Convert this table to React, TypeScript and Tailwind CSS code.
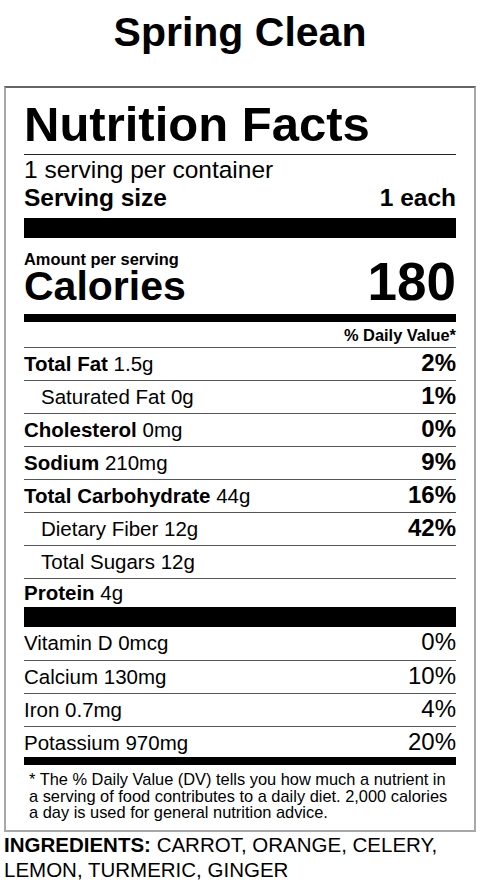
const nutrients = [
  { label: "Total Fat", amount: "1.5g", dv: "2%", bold: true },
  { label: "Saturated Fat", amount: "0g", dv: "1%", indent: true },
  { label: "Cholesterol", amount: "0mg", dv: "0%", bold: true },
  { label: "Sodium", amount: "210mg", dv: "9%", bold: true },
  { label: "Total Carbohydrate", amount: "44g", dv: "16%", bold: true },
  { label: "Dietary Fiber", amount: "12g", dv: "42%", indent: true },
  { label: "Total Sugars", amount: "12g", dv: "", indent: true },
];

const vitamins = [
  { label: "Vitamin D", amount: "0mcg", dv: "0%" },
  { label: "Calcium", amount: "130mg", dv: "10%" },
  { label: "Iron", amount: "0.7mg", dv: "4%" },
  { label: "Potassium", amount: "970mg", dv: "20%" },
];

function App() {
  return (
    <div
      className="w-[480px] min-h-[896px] bg-white text-black"
      style={{ fontFamily: '"Liberation Sans", Arial, sans-serif' }}
    >
      <h1 className="pt-[12px] text-center text-[41px] font-bold leading-[40px]">
        Spring Clean
      </h1>

      <div className="mx-[4px] mt-[34px] border-2 border-[#a8a8a8] border-t-[#666] px-[18px] pb-[9px]">
        <div className="pt-[12px] pb-[6px] text-[49px] font-bold leading-[48px] border-b border-[#222]">
          Nutrition Facts
        </div>
        <div className="pt-[3px] text-[24.5px] leading-[24px]">1 serving per container</div>
        <div className="mt-[4px] flex justify-between text-[24.5px] font-bold leading-[24px]">
          <span>Serving size</span>
          <span>1 each</span>
        </div>
        <div className="mt-[8px] h-[20px] bg-black" />

        <div className="pt-[13px] text-[16.4px] font-bold leading-[16px]">Amount per serving</div>
        <div className="flex h-[40px] items-baseline justify-between font-bold">
          <span className="text-[41px] leading-[38px]">Calories</span>
          <span className="text-[53px] leading-[29px]">180</span>
        </div>
        <div className="mt-[7px] h-[8px] bg-black" />

        <div className="pt-[5px] pb-[4px] text-right text-[16.4px] font-bold leading-[16px]">
          % Daily Value*
        </div>

        {nutrients.map((n) => (
          <div
            key={n.label}
            className={`flex h-[33px] items-baseline justify-between border-t border-[#555] ${
              n.indent ? "pl-[17px]" : ""
            }`}
          >
            <span className="text-[20.5px] leading-[32px]">
              {n.bold ? <b>{n.label}</b> : n.label} {n.amount}
            </span>
            <b className="text-[24px] leading-[29px]">{n.dv}</b>
          </div>
        ))}
        <div className="h-[29px] border-t border-[#555] text-[20.5px] leading-[28px]">
          <b>Protein</b> 4g
        </div>
        <div className="h-[20px] bg-black" />

        {vitamins.map((v, i) => (
          <div
            key={v.label}
            className={
              i === 0
                ? "flex h-[33px] items-baseline justify-between"
                : i === vitamins.length - 1
                ? "flex h-[31px] items-baseline justify-between border-t border-[#555]"
                : "flex h-[33px] items-baseline justify-between border-t border-[#555]"
            }
          >
            <span className="text-[20.5px] leading-[32px]">
              {v.label} {v.amount}
            </span>
            <span className="text-[24px] leading-[29px]">{v.dv}</span>
          </div>
        ))}
        <div className="h-[8px] bg-black" />

        <p className="pl-[5px] pr-[3px] pt-[6px] text-[16.4px] leading-[16.5px]">
          * The % Daily Value (DV) tells you how much a nutrient in a serving of food
          contributes to a daily diet. 2,000 calories a day is used for general nutrition
          advice.
        </p>
      </div>

      <p className="px-[4px] text-[20.5px] leading-[25px]">
        <b>INGREDIENTS:</b> CARROT, ORANGE, CELERY, LEMON, TURMERIC, GINGER
      </p>
    </div>
  );
}

export default App;
